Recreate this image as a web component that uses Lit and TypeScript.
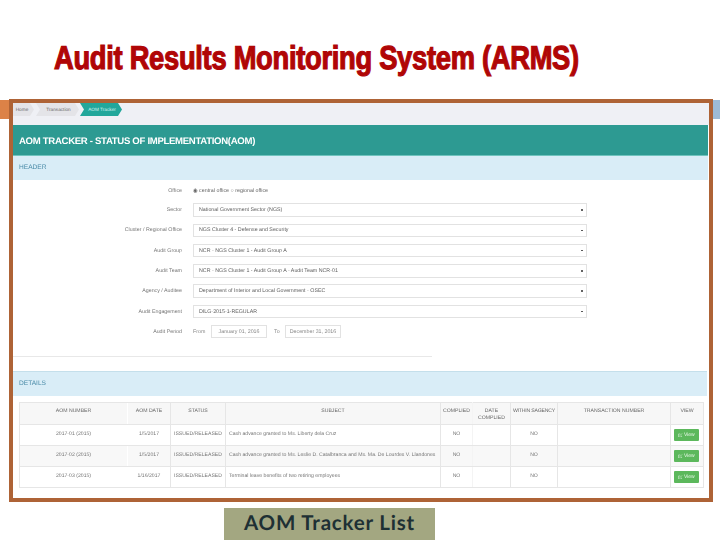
import { LitElement, html, css } from "lit";
import { customElement } from "lit/decorators.js";

const selects: [string, string][] = [
  ["Sector", "National Government Sector (NGS)"],
  ["Cluster / Regional Office", "NGS Cluster 4 - Defense and Security"],
  ["Audit Group", "NCR - NGS Cluster 1 - Audit Group A"],
  ["Audit Team", "NCR - NGS Cluster 1 - Audit Group A - Audit Team NCR-01"],
  ["Agency / Auditee", "Department of Interior and Local Government - OSEC"],
  ["Audit Engagement", "DILG-2015-1-REGULAR"],
];

const rows = [
  ["2017-01 (2015)", "1/5/2017", "Cash advance granted to Ms. Liberty dela Cruz"],
  ["2017-02 (2015)", "1/5/2017", "Cash advance granted to Ms. Leslie D. Catalbranca and Ms. Ma. De Lourdes V. Llandones"],
  ["2017-03 (2015)", "1/16/2017", "Terminal leave benefits of two retiring employees"],
];

@customElement("app-root")
export class AppRoot extends LitElement {
  static styles = css`
    :host {
      display: block;
      position: relative;
      width: 720px;
      height: 540px;
      overflow: hidden;
      background: #fff;
      font-family: "Liberation Sans", Arial, sans-serif;
      text-rendering: geometricPrecision;
    }
    .tab-left, .tab-right {
      position: absolute;
      top: 100px;
      height: 19px;
    }
    .tab-left { left: 0; width: 9px; background: #dc8247; }
    .tab-right { left: 713px; width: 7px; background: #9dbbd6; }
    .title {
      height: 99px;
      box-sizing: border-box;
      padding: 39px 0 0 54px;
      margin: 0;
      font-size: 33px;
      line-height: 38px;
      font-weight: 700;
      color: #b00606;
      -webkit-text-stroke: 1.2px #b00606;
      white-space: nowrap;
    }
    .title span {
      display: inline-block;
      transform: scaleX(0.828);
      transform-origin: left center;
      letter-spacing: -0.35px;
    }
    .frame {
      position: relative;
      margin-left: 9px;
      width: 704px;
      height: 403px;
      box-sizing: border-box;
      border: 4px solid #ae6336;
      background: #fff;
      overflow: hidden;
    }
    .shot { filter: blur(0.35px); color: #777; height: 100%; }
    .crumbs {
      height: 22px;
      background: #eff0f5;
      display: flex;
      gap: 2px;
      align-items: flex-start;
      font-size: 4.7px;
    }
    .crumb {
      width: 21px;
      height: 13px;
      line-height: 13px;
      background: #e4e4e8;
      color: #666;
      text-align: center;
      box-sizing: border-box;
      padding-right: 3px;
      clip-path: polygon(0 0, calc(100% - 4px) 0, 100% 50%, calc(100% - 4px) 100%, 0 100%);
    }
    .crumb.mid {
      width: 43px;
      padding: 0 0 0 2px;
      clip-path: polygon(0 0, calc(100% - 4px) 0, 100% 50%, calc(100% - 4px) 100%, 0 100%, 4px 50%);
    }
    .crumb.on { background: #22a79b; color: #d8f3ef; width: 42px; margin-left: -1px; }
    .head {
      height: 31px;
      margin-right: 1px;
      box-sizing: border-box;
      background: #2d9a92;
      border-bottom: 1px solid #6fc4be;
      color: #fff;
      font-size: 9.6px;
      font-weight: 700;
      line-height: 33px;
      padding-left: 6px;
      white-space: nowrap;
      letter-spacing: -0.32px;
    }
    .band {
      height: 24px;
      margin-right: 1px;
      background: #d9edf7;
      color: #4a8ba8;
      font-size: 6.6px;
      line-height: 24px;
      padding-left: 6px;
    }
    .form {
      display: grid;
      grid-template-columns: 169px 394px;
      column-gap: 11px;
      row-gap: 6.8px;
      align-items: center;
      padding-top: 4.5px;
      height: 176px;
      box-sizing: border-box;
      align-content: start;
      font-size: 5.3px;
    }
    .form label { text-align: right; color: #777; white-space: nowrap; }
    .radio { height: 12px; line-height: 12px; color: #666; white-space: nowrap; }
    .field {
      height: 13.5px;
      box-sizing: border-box;
      border: 1px solid #e2e2e2;
      display: flex;
      align-items: center;
      justify-content: space-between;
      padding: 0 3px 0 5px;
      color: #5e5e5e;
      white-space: nowrap;
    }
    .field i {
      width: 1.6px;
      height: 1.6px;
      background: #444;
      border-radius: 50%;
    }
    .period { display: flex; align-items: center; gap: 5px; color: #888; }
    .period .date {
      width: 56px;
      height: 13px;
      box-sizing: border-box;
      border: 1px solid #e2e2e2;
      text-align: center;
      line-height: 12px;
      color: #888;
    }
    .period .from { width: 13px; }
    .period .to { margin-left: 2px; width: 6px; }
    .rule {
      width: 419px;
      height: 1px;
      background: #e8e8e8;
      margin-bottom: 14px;
    }
    .band.details { border-top: 1px solid #c4dfeb; margin-right: 2px; }
    .table-wrap { padding: 6px 0 0 6px; }
    table {
      border-collapse: collapse;
      table-layout: fixed;
      width: 684px;
      font-size: 5.15px;
      color: #777;
    }
    th, td {
      border: 1px solid #e6e6e6;
      text-align: center;
      padding: 0;
      white-space: nowrap;
      overflow: hidden;
    }
    th {
      height: 22px;
      font-weight: 400;
      color: #666;
      background: #f7f7f7;
      vertical-align: top;
      padding-top: 4.5px;
      box-sizing: border-box;
      line-height: 7.5px;
    }
    td { height: 21px; box-sizing: border-box; vertical-align: top; padding-top: 5.5px; }
    td.left { text-align: left; padding-left: 3px; }
    tbody tr:nth-child(2) td { background: #f8f8f8; }
    .nb-r { border-right-color: transparent; }
    .nb-l { border-left-color: transparent; }
    .faint-r { border-right-color: #f4f4f4; }
    td.btn { padding-top: 4px; padding-right: 1px; }
    .narrow { letter-spacing: -0.2px; }
    .view {
      display: inline-flex;
      align-items: center;
      justify-content: center;
      gap: 1px;
      width: 24.5px;
      height: 12px;
      border-radius: 1px;
      background: #5cb85c;
      color: #e8f7e8;
      font-size: 5px;
    }
    .view svg { width: 4.5px; height: 4.5px; }
    .caption {
      position: absolute;
      left: 224px;
      top: 508px;
      width: 211px;
      height: 32px;
      background: #a3a781;
      color: #1e3034;
      font-family: Lato, "Open Sans", sans-serif;
      font-size: 20.5px;
      font-weight: 700;
      line-height: 31px;
      text-align: center;
      letter-spacing: 0.8px;
      white-space: nowrap;
    }
  `;

  private editIcon() {
    return html`<svg viewBox="0 0 12 12" fill="none" stroke="#e8f7e8" stroke-width="1.4">
      <path d="M9.5 7v3.5h-8v-8H6" />
      <path d="M4.5 7.5 11 1" />
    </svg>`;
  }

  render() {
    return html`
      <div class="tab-left"></div>
      <div class="tab-right"></div>
      <h1 class="title"><span>Audit Results Monitoring System (ARMS)</span></h1>
      <div class="frame">
        <div class="shot">
          <div class="crumbs">
            <div class="crumb">Home</div>
            <div class="crumb mid">Transaction</div>
            <div class="crumb mid on">AOM Tracker</div>
          </div>
          <div class="head">AOM TRACKER - STATUS OF IMPLEMENTATION(AOM)</div>
          <div class="band">HEADER</div>
          <div class="form">
            <label>Office</label>
            <div class="radio">◉ central office ○ regional office</div>
            ${selects.map(
              ([l, v]) => html`
                <label>${l}</label>
                <div class="field"><span>${v}</span><i></i></div>
              `
            )}
            <label>Audit Period</label>
            <div class="period">
              <span class="from">From</span>
              <div class="date">January 01, 2016</div>
              <span class="to">To</span>
              <div class="date">December 31, 2016</div>
            </div>
          </div>
          <div class="rule"></div>
          <div class="band details">DETAILS</div>
          <div class="table-wrap">
            <table>
              <colgroup>
                <col style="width:108px" /><col style="width:43px" /><col style="width:55px" />
                <col style="width:215px" /><col style="width:32px" /><col style="width:38px" />
                <col style="width:47px" /><col style="width:113px" /><col style="width:33px" />
              </colgroup>
              <thead>
                <tr>
                  <th class="nb-r">AOM NUMBER</th>
                  <th class="nb-l">AOM DATE</th>
                  <th>STATUS</th>
                  <th>SUBJECT</th>
                  <th class="faint-r">COMPLIED</th>
                  <th>DATE<br />COMPLIED</th>
                  <th class="narrow">WITHIN SAGENCY</th>
                  <th>TRANSACTION NUMBER</th>
                  <th>VIEW</th>
                </tr>
              </thead>
              <tbody>
                ${rows.map(
                  (r) => html`
                    <tr>
                      <td class="nb-r">${r[0]}</td>
                      <td class="nb-l">${r[1]}</td>
                      <td>ISSUED/RELEASED</td>
                      <td class="left">${r[2]}</td>
                      <td class="faint-r">NO</td>
                      <td></td>
                      <td>NO</td>
                      <td></td>
                      <td class="btn"><span class="view">${this.editIcon()}View</span></td>
                    </tr>
                  `
                )}
              </tbody>
            </table>
          </div>
        </div>
      </div>
      <div class="caption">AOM Tracker List</div>
    `;
  }
}
